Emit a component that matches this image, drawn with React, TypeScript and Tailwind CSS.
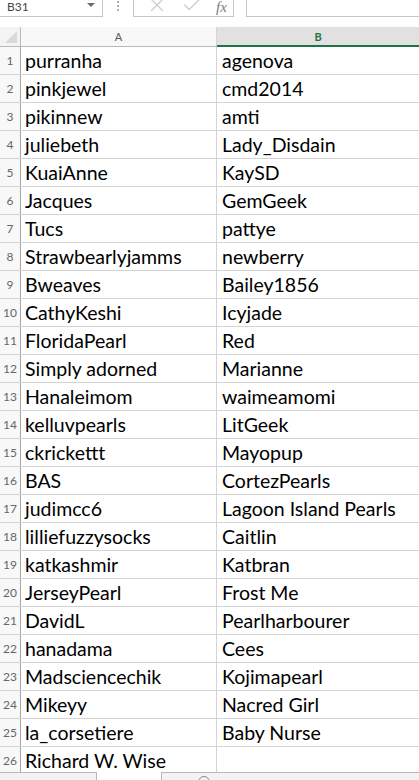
import { Check, X } from 'lucide-react'

const rows: [string, string][] = [
  ['purranha', 'agenova'],
  ['pinkjewel', 'cmd2014'],
  ['pikinnew', 'amti'],
  ['juliebeth', 'Lady_Disdain'],
  ['KuaiAnne', 'KaySD'],
  ['Jacques', 'GemGeek'],
  ['Tucs', 'pattye'],
  ['Strawbearlyjamms', 'newberry'],
  ['Bweaves', 'Bailey1856'],
  ['CathyKeshi', 'Icyjade'],
  ['FloridaPearl', 'Red'],
  ['Simply adorned', 'Marianne'],
  ['Hanaleimom', 'waimeamomi'],
  ['kelluvpearls', 'LitGeek'],
  ['ckrickettt', 'Mayopup'],
  ['BAS', 'CortezPearls'],
  ['judimcc6', 'Lagoon Island Pearls'],
  ['lilliefuzzysocks', 'Caitlin'],
  ['katkashmir', 'Katbran'],
  ['JerseyPearl', 'Frost Me'],
  ['DavidL', 'Pearlharbourer'],
  ['hanadama', 'Cees'],
  ['Madsciencechik', 'Kojimapearl'],
  ['Mikeyy', 'Nacred Girl'],
  ['la_corsetiere', 'Baby Nurse'],
  ['Richard W. Wise', ''],
]

export default function App() {
  return (
    <div className="w-[419px] h-[780px] overflow-hidden bg-white flex flex-col font-['Lato',sans-serif]">
      {/* formula bar strip */}
      <div className="h-[17px] flex shrink-0">
        <div className="w-[103px] border-r border-b border-[#c6c6c6] flex items-center justify-between pl-[7px] pr-[7px] text-[12px] leading-none text-[#444]">
          <span className="-mt-[2px]">B31</span>
          <svg width="8" height="5" viewBox="0 0 8 5" className="-mt-[6px]">
            <path d="M0 0 L8 0 L4 4 Z" fill="#6b6b6b" />
          </svg>
        </div>
        <div className="w-[30px] flex justify-center">
          <div className="flex flex-col gap-[2px] pt-[1px]">
            <span className="w-[2px] h-[2px] bg-[#b0b0b0]" />
            <span className="w-[2px] h-[2px] bg-[#b0b0b0]" />
            <span className="w-[2px] h-[2px] bg-[#b0b0b0]" />
          </div>
        </div>
        <div className="w-[101px] border-l border-r border-b border-[#c6c6c6] flex items-start pl-[12px] gap-[13px]">
          <X size={22} strokeWidth={1.5} className="text-[#cfcfcf] -mt-[6px]" />
          <Check size={22} strokeWidth={1.5} className="text-[#cfcfcf] -mt-[6px]" />
          <span className="font-['Liberation_Serif',serif] italic text-[15px] leading-[15px] pr-[2px] text-[#7a7a7a]">
            fx
          </span>
        </div>
        <div className="w-[12px]" />
        <div className="flex-1 border-l border-b border-[#c6c6c6]" />
      </div>
      <div className="h-[10px] shrink-0" />

      {/* column headers */}
      <div className="h-[20px] shrink-0 flex border-b border-[#b9b9b9] text-[11px] leading-none">
        <div className="w-[21px] border-r border-[#b9b9b9] bg-[#f3f3f3] relative">
          <svg width="12" height="12" viewBox="0 0 12 12" className="absolute right-[3px] bottom-[3px]">
            <path d="M12 0 L12 12 L0 12 Z" fill="#d9d9d9" />
          </svg>
        </div>
        <div className="w-[196px] border-r border-[#d4d4d4] bg-[#f8f8f8] flex items-center justify-center text-[#555]">
          A
        </div>
        <div className="flex-1 bg-[#e1e1e1] border-b-2 border-[#217346] -mb-[1px] flex items-center justify-center font-bold text-[#217346]">
          B
        </div>
      </div>

      {/* rows */}
      <div className="flex-1 overflow-hidden">
        {rows.map(([a, b], i) => (
          <div key={i} className="h-[28px] flex border-b border-[#d4d4d4]">
            <div className="w-[21px] border-r border-[#a6a6a6] bg-[#f8f8f8] flex items-end justify-center pb-[7px] text-[12px] leading-none text-[#666]">
              {i + 1}
            </div>
            <div className="w-[196px] border-r border-[#d4d4d4] flex items-end pl-[4px] pb-[4px] text-[19.5px] leading-none text-black whitespace-nowrap">
              {a}
            </div>
            <div className="flex-1 flex items-end pl-[5px] pb-[4px] text-[19.5px] leading-none text-black whitespace-nowrap">
              {b}
            </div>
          </div>
        ))}
      </div>

      {/* sheet tab strip */}
      <div className="h-[8px] shrink-0 flex bg-white">
        <div className="w-[97px] border-t border-r border-[#b9b9b9] bg-[#f3f3f3]" />
        <div className="w-[64px] bg-white" />
        <div className="flex-1 border-t border-l border-[#b9b9b9] bg-[#f3f3f3] relative">
          <span className="absolute left-[36px] top-[3px] w-[12px] h-[12px] rounded-full border border-[#8a8a8a]" />
        </div>
      </div>
    </div>
  )
}
